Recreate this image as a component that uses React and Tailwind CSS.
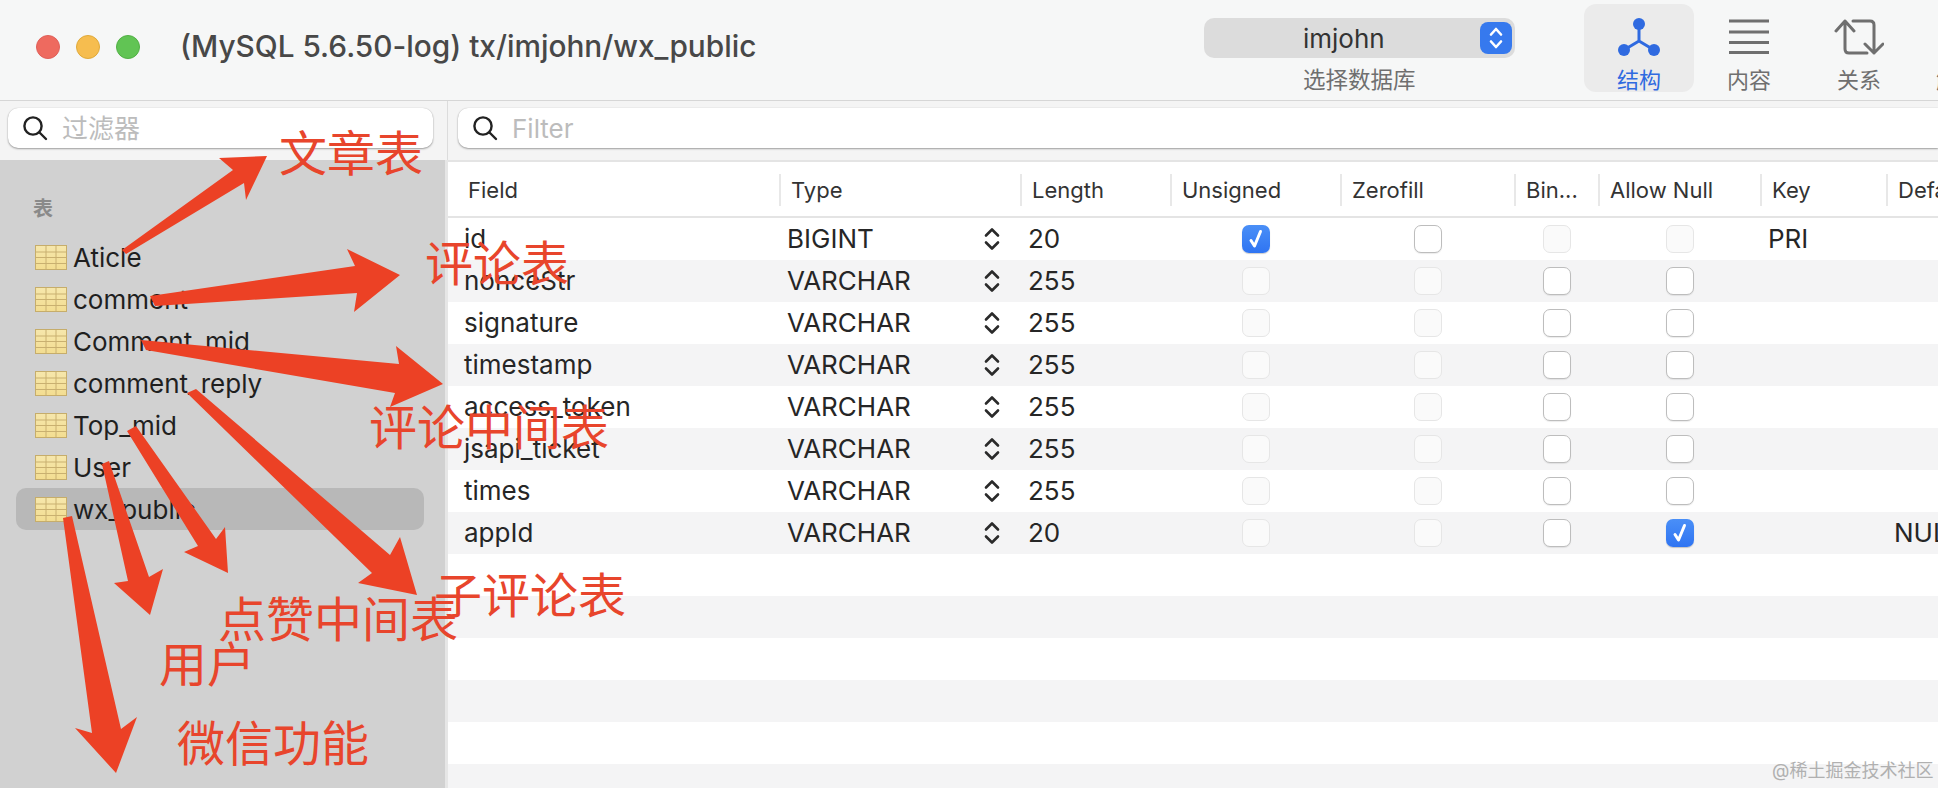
const cjk = "font-['Inter','Noto_Sans_CJK_SC',sans-serif]";

const tables = ["Aticle", "comment", "Comment_mid", "comment_reply", "Top_mid", "User", "wx_public"];

const gridCols = "grid grid-cols-[332px_241px_150px_170px_174px_84px_162px_126px_1fr]";

const headers = ["Field", "Type", "Length", "Unsigned", "Zerofill", "Bin...", "Allow Null", "Key", "Default"];

// 0 = faint, 1 = enabled, 2 = checked
const rows = [
  { field: "id", type: "BIGINT", len: "20", checks: [2, 1, 0, 0], key: "PRI" },
  { field: "nonceStr", type: "VARCHAR", len: "255", checks: [0, 0, 1, 1] },
  { field: "signature", type: "VARCHAR", len: "255", checks: [0, 0, 1, 1] },
  { field: "timestamp", type: "VARCHAR", len: "255", checks: [0, 0, 1, 1] },
  { field: "access_token", type: "VARCHAR", len: "255", checks: [0, 0, 1, 1] },
  { field: "jsapi_ticket", type: "VARCHAR", len: "255", checks: [0, 0, 1, 1] },
  { field: "times", type: "VARCHAR", len: "255", checks: [0, 0, 1, 1] },
  { field: "appId", type: "VARCHAR", len: "20", checks: [0, 0, 1, 2], def: "NULL" },
];

const emptyRows = [8, 9, 10, 11, 12, 13];

const arrows = [
  "122,250 233,170 219,158 267,156 246,200 244,183 126,254",
  "150,296 355,266 347,249 400,275 354,312 357,293 155,306",
  "141,340 399,364 396,346 443,384 390,407 395,393 146,350",
  "196,389 390,555 400,537 417,595 358,583 372,573 187,393",
  "136,426 216,539 225,527 228,573 184,552 198,546 127,431",
  "109,461 149,577 163,569 150,615 114,583 128,581 102,464",
  "72,516 121,729 137,717 116,773 75,728 92,733 63,518",
];

function SearchIcon() {
  return (
    <svg width="26" height="26" viewBox="0 0 26 26" fill="none" stroke="#222" strokeWidth="2.4" strokeLinecap="round">
      <circle cx="11" cy="11" r="8.6" />
      <path d="M17.5 17.5 24 24" />
    </svg>
  );
}

function FilterBox({ text, className }) {
  return (
    <div className={`flex h-[40px] items-center gap-[14px] rounded-[10px] bg-white pl-[14px] shadow-[0_1px_2px_rgba(0,0,0,0.35),0_0_1px_rgba(0,0,0,0.2)] ${className}`}>
      <SearchIcon />
      <span className="text-[26px] text-[#bcbcbc]">{text}</span>
    </div>
  );
}

function TableIcon() {
  return (
    <svg width="32" height="25" viewBox="0 0 32 25" className="shrink-0">
      <defs>
        <linearGradient id="tbl" x1="0" y1="0" x2="0" y2="1">
          <stop offset="0" stopColor="#f6e7ac" />
          <stop offset="1" stopColor="#f3dd91" />
        </linearGradient>
      </defs>
      <rect x="0.5" y="0.5" width="31" height="24" fill="url(#tbl)" stroke="#c6ad6b" />
      <path d="M1 7h30M1 12.5h30M1 18.5h30M11 1v23M21 1v23" stroke="#c9b070" strokeWidth="1" fill="none" />
    </svg>
  );
}

function Checkbox({ state }) {
  if (state === 2) {
    return (
      <div className="flex h-[28px] w-[28px] items-center justify-center rounded-[7px] bg-gradient-to-b from-[#4a8ff7] to-[#2f74f2] shadow-[0_1px_1px_rgba(0,0,0,0.2)]">
        <svg width="20" height="22" viewBox="0 0 20 22" fill="none" stroke="#fff" strokeWidth="3" strokeLinecap="round" strokeLinejoin="round">
          <path d="M5 12.5 8.500 18 14.500 3.500" />
        </svg>
      </div>
    );
  }
  if (state === 1) {
    return <div className="h-[28px] w-[28px] rounded-[7px] border border-[#bdbdbd] bg-white shadow-[0_1px_1px_rgba(0,0,0,0.08)]" />;
  }
  return <div className="h-[28px] w-[28px] rounded-[7px] border border-[#e6e6e6] bg-[#fafafa]" />;
}

function Stepper() {
  return (
    <svg width="16" height="24" viewBox="0 0 16 24" fill="none" stroke="#2a2a2a" strokeWidth="2.6" strokeLinecap="round" strokeLinejoin="round">
      <path d="M2 8.5 8 2.5l6 6M2 15.5l6 6 6-6" />
    </svg>
  );
}

function ToolButton({ label, active, children }) {
  return (
    <div className={`flex h-[88px] w-[110px] shrink-0 flex-col items-center rounded-[12px] ${active ? "bg-[#ebebeb] text-[#2f6ae0]" : "text-[#6f6f6f]"}`}>
      <div className="flex h-[61px] items-center justify-center">{children}</div>
      <span className="mt-[3px] whitespace-nowrap text-[22px] leading-[24px]">{label}</span>
    </div>
  );
}

function Note({ children, className }) {
  return (
    <span className={`absolute whitespace-nowrap text-[48px] leading-[48px] text-[#e8452c] ${className}`}>
      {children}
    </span>
  );
}

export default function App() {
  return (
    <div className={`relative h-[788px] w-[1938px] overflow-hidden bg-white text-[#262626] ${cjk}`}>
      {/* toolbar */}
      <div className="flex h-[101px] items-start border-b border-[#d6d6d6] bg-[#f6f7f7]">
        <div className="flex h-full w-[1204px] shrink-0 items-center pb-[6px] pl-[36px]">
          <div className="flex gap-[16px]">
            <div className="h-[24px] w-[24px] rounded-full border border-[#e0605a] bg-[#ee6a5f]" />
            <div className="h-[24px] w-[24px] rounded-full border border-[#e0aa3a] bg-[#f6bd4f]" />
            <div className="h-[24px] w-[24px] rounded-full border border-[#52b045] bg-[#61c454]" />
          </div>
          <span className="ml-[40px] whitespace-nowrap text-[29.800px] font-medium leading-none text-[#484848]">
            (MySQL 5.6.50-log) tx/imjohn/wx_public
          </span>
        </div>
        <div className="mt-[18px] flex w-[311px] shrink-0 flex-col">
          <div className="relative flex h-[40px] items-center rounded-[10px] bg-[#dcdcdc] pl-[99px] text-[26px] text-[#333]">
            imjohn
            <div className="absolute right-[3px] top-[4px] flex h-[32px] w-[32px] items-center justify-center rounded-[8px] bg-[#3679ee]">
              <svg width="16" height="26" viewBox="0 0 16 26" fill="none" stroke="#fff" strokeWidth="2.6" strokeLinecap="round" strokeLinejoin="round">
                <path d="M3 9.5 8 4l5 5.500M3 16.500 8 22l5-5.500" />
              </svg>
            </div>
          </div>
          <span className="mt-[8px] pl-[99px] text-[22.500px] leading-[28px] text-[#6f6f6f]">选择数据库</span>
        </div>
        <div className="ml-[69px] mt-[4px] flex">
          <ToolButton label="结构" active>
            <svg width="44" height="40" viewBox="0 0 44 40" fill="#2f6ae0" stroke="#2f6ae0" className="mt-[4px]">
              <path d="M22 6v18M22 24 7 33M22 24l15 9" strokeWidth="3" fill="none" />
              <circle cx="22" cy="7" r="6" strokeWidth="0" />
              <circle cx="7" cy="33" r="6" strokeWidth="0" />
              <circle cx="37" cy="33" r="6" strokeWidth="0" />
            </svg>
          </ToolButton>
          <ToolButton label="内容">
            <svg width="40" height="36" viewBox="0 0 40 36" fill="none" stroke="#6f6f6f" strokeWidth="3" className="mt-[4px]">
              <path d="M0 2h40M0 13h40M0 23.500h40M0 33.500h40" />
            </svg>
          </ToolButton>
          <ToolButton label="关系">
            <svg width="50" height="38" viewBox="0 0 50 38" fill="none" stroke="#6f6f6f" strokeWidth="3" strokeLinecap="round" strokeLinejoin="round" className="mt-[4px]">
              <path d="M2 13 11 3l9 10M11 3v28q0 4 4 4h18M19 3h17q4 0 4 4v28M31 26l9 9 9-9" />
            </svg>
          </ToolButton>
          <ToolButton label="触发器" />
        </div>
      </div>

      <div className="flex h-[687px]">
        {/* sidebar */}
        <div className="flex w-[448px] shrink-0 flex-col">
          <div className="h-[59px] shrink-0 border-r border-[#dcdcdc] bg-[#f4f4f4] pl-[8px] pr-[14px] pt-[7px]">
            <FilterBox text="过滤器" />
          </div>
          <div className="flex-1 border-r-[3px] border-[#e6e6e6] bg-[#d1d1d1] pl-[16px] pr-[21px]">
            <div className="pl-[17px] pt-[37px] text-[20px] font-bold leading-[24px] text-[#8a8a8a]">表</div>
            <div className="mt-[15px]">
              {tables.map((name) => (
                <div
                  key={name}
                  className={`flex h-[42px] items-center gap-[6px] rounded-[10px] pl-[19px] text-[26px] text-[#1f1f1f] ${name === "wx_public" ? "bg-[#b8b8b8]" : ""}`}
                >
                  <TableIcon />
                  <span>{name}</span>
                </div>
              ))}
            </div>
          </div>
        </div>

        {/* main */}
        <div className="min-w-0 flex-1">
          <div className="h-[61px] border-b-2 border-[#e4e4e4] bg-[#f4f4f4] pl-[10px] pt-[7px]">
            <FilterBox text="Filter" className="rounded-r-none" />
          </div>
          <div className={`${gridCols} h-[56px] items-center border-b-2 border-[#e4e4e4] pt-[2px] text-[22px] text-[#333]`}>
            {headers.map((h, i) => (
              <div key={h} className={`flex h-[32px] items-center whitespace-nowrap ${i > 0 ? "-ml-px border-l-2 border-[#e8e8e8] pl-[10px]" : "pl-[20px]"}`}>
                <span className="overflow-hidden">{h}</span>
              </div>
            ))}
          </div>
          {rows.map((r, i) => (
            <div key={r.field} className={`${gridCols} h-[42px] items-center text-[26px] leading-[32px] ${i % 2 ? "bg-[#f4f4f5]" : ""}`}>
              <div className="pl-[16px]">{r.field}</div>
              <div className="flex items-center justify-between pl-[7px] pr-[21px]">
                <span>{r.type}</span>
                <Stepper />
              </div>
              <div className="pl-[7px]">{r.len}</div>
              {r.checks.map((c, j) => (
                <div key={j} className="flex justify-center">
                  <Checkbox state={c} />
                </div>
              ))}
              <div className="pl-[7px]">{r.key}</div>
              <div className="pl-[7px]">{r.def}</div>
            </div>
          ))}
          {emptyRows.map((n) => (
            <div key={n} className={`h-[42px] ${n % 2 ? "bg-[#f4f4f5]" : ""}`} />
          ))}
        </div>
      </div>

      {/* red hand-drawn annotations on top of the screenshot */}
      <svg width="1938" height="788" className="pointer-events-none absolute left-0 top-0">
        {arrows.map((p) => (
          <polygon key={p} points={p} fill="#ec4125" />
        ))}
      </svg>
      <Note className="left-[279px] top-[130px]">文章表</Note>
      <Note className="left-[425px] top-[240px]">评论表</Note>
      <Note className="left-[369px] top-[404px]">评论中间表</Note>
      <Note className="left-[434px] top-[572px]">子评论表</Note>
      <Note className="left-[218px] top-[596px]">点赞中间表</Note>
      <Note className="left-[159px] top-[641px]">用户</Note>
      <Note className="left-[177px] top-[720px]">微信功能</Note>

      <span className="absolute left-[1772px] top-[760px] whitespace-nowrap text-[18px] leading-[22px] text-[#b0b0b0]">
        @稀土掘金技术社区
      </span>
    </div>
  );
}
